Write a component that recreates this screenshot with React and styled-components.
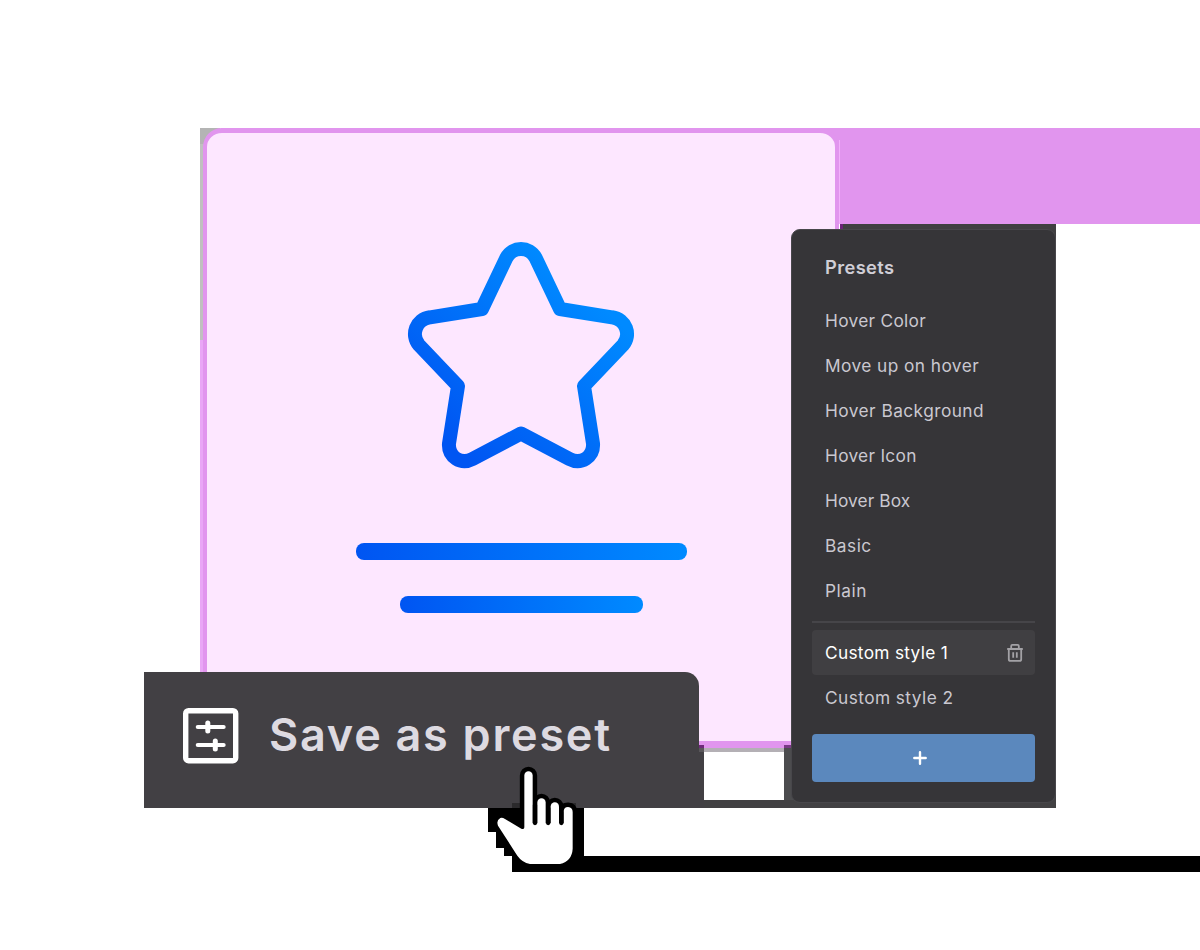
import React from 'react';
import styled, { createGlobalStyle } from 'styled-components';

const GlobalStyle = createGlobalStyle`
  * { box-sizing: border-box; }
  body { margin: 0; background: #fff; font-family: Inter, "Liberation Sans", sans-serif; }
`;

const fill = (color, x, y, w, h) =>
  `linear-gradient(${color}, ${color}) ${x}px ${y}px / ${w}px ${h}px no-repeat`;

/* The card, the preset panel and the save bar overlap, so they share one grid. */
const Stage = styled.main`
  display: grid;
  grid-template-columns: 144px 59px 495px 1px 92px 48px 217px 1fr;
  grid-template-rows: 128px 101px 443px 76px 55px 5px 1fr;
  width: 1200px;
  height: 950px;
  overflow: hidden;
  background:
    ${fill('#b4b4b4', 200, 128, 20, 16)},
    ${fill('#c0c0c0', 200, 144, 10, 196)},
    ${fill('#e9a6f6', 200, 340, 10, 340)},
    ${fill('#f2b0fb', 839, 140, 1, 84)},
    ${fill('#e195ee', 820, 128, 380, 96)},
    ${fill('#b4b0b5', 699, 740, 92, 12)},
    #fff;
`;

const Card = styled.section`
  grid-area: 2 / 3 / 5 / 7;
  border: 4px solid #e195ee;
  border-top-width: 5px;
  border-bottom-width: 7px;
  border-radius: 19px;
  background: #fde7ff;
  display: flex;
  flex-direction: column;
  align-items: center;
  padding: 104px 0 0 1px;
`;

const Underlay = styled.div`
  grid-area: 1 / 1 / -1 / -1;
  background:
    ${fill('#6b2378', 840, 224, 3, 5)},
    ${fill('#403f41', 840, 224, 216, 20)},
    ${fill('#6f2a7b', 699, 745, 5, 3)},
    ${fill('#59565a', 699, 748, 5, 4)},
    ${fill('#424044', 699, 752, 5, 56)},
    ${fill('#7b3a87', 784, 745, 7, 3)},
    ${fill('#4c4c4e', 784, 748, 12, 52)},
    ${fill('#424143', 699, 800, 357, 8)},
    ${fill('#424143', 1040, 780, 16, 20)};
`;

const StarIcon = styled.svg`
  display: block;
  width: 240px;
  height: 240px;
`;

const Bars = styled.div`
  display: flex;
  flex-direction: column;
  align-items: center;
  gap: 36px;
  padding-top: 66px;
`;

const Bar = styled.div`
  width: ${(p) => p.$width}px;
  height: 17px;
  border-radius: 8px;
  background: linear-gradient(90deg, #0055f2, #008aff);
`;

const PresetPanel = styled.aside`
  grid-area: 3 / 5 / 6 / 8;
  justify-self: end;
  width: 265px;
  height: 574px;
  padding: 16px 20px 20px;
  border: 1px solid #48474b;
  border-radius: 9px;
  background: #363538;
  display: flex;
  flex-direction: column;
`;

const PanelTitle = styled.h2`
  margin: 0 0 8px;
  padding-left: 13px;
  height: 44px;
  line-height: 43px;
  font-size: 18.3px;
  font-weight: 600;
  color: #d0ced6;
`;

const PresetRow = styled.div`
  display: flex;
  align-items: center;
  justify-content: space-between;
  flex: none;
  height: 45px;
  padding: 0 11px 0 13px;
  border-radius: 4px;
  font-size: 17.3px;
  white-space: nowrap;
  color: ${(p) => (p.$active ? '#fff' : '#cac8d0')};
  background: ${(p) => (p.$active ? '#403f42' : 'transparent')};
`;

const Label = styled.span`
  letter-spacing: ${(p) => p.$tracking || 0}px;
`;

const Divider = styled.hr`
  width: 100%;
  height: 2px;
  margin: 8px 0 7px;
  border: 0;
  background: #464549;
`;

const AddButton = styled.button`
  display: flex;
  align-items: center;
  justify-content: center;
  flex: none;
  height: 48px;
  margin-top: 14px;
  padding: 0 7px 0 0;
  border: 0;
  border-radius: 4px;
  background: #5b88bd;
`;

const SaveBar = styled.div`
  grid-area: 4 / 2 / 7 / 5;
  padding: 0 0 8px 38px;
  border-top-right-radius: 14px;
  background: #424044;
  display: flex;
  align-items: center;
  gap: 29px;
`;

const SaveLabel = styled.span`
  font-size: 45px;
  line-height: 54px;
  padding-bottom: 2px;
  font-weight: 600;
  letter-spacing: 1.73px;
  color: #dddae1;
  white-space: nowrap;
`;

const Cursor = styled.svg`
  position: absolute;
  left: 480px;
  top: 755px;
`;

const CursorShadow = styled.svg`
  position: absolute;
  left: 488px;
  top: 800px;
`;

const presets = [
  ['Hover Color', 0.3],
  ['Move up on hover', 0.43],
  ['Hover Background', 0.45],
  ['Hover Icon', 0.29],
  ['Hover Box', 0.1],
  ['Basic', 0.5],
  ['Plain', 0.55],
];

function Star() {
  return (
    <StarIcon viewBox="402 237 240 240" fill="none">
      <defs>
        <linearGradient id="star" gradientUnits="userSpaceOnUse" x1="445" y1="440" x2="585" y2="290">
          <stop offset="0" stopColor="#0055f2" />
          <stop offset="1" stopColor="#008aff" />
        </linearGradient>
      </defs>
      <path
        d="M482 309 L506.3 258 C512.5 246 529.5 246 535.7 258 L560 309 L612 317.3 C626 319 631.5 335 623 345 L584 386 L593 443.5 C594 457 581 465 569.5 459 L521 433.5 L472.5 459 C461 465 448 457 449 443.5 L458 386 L419 345 C410.5 335 416 319 430 317.3 Z"
        stroke="url(#star)"
        strokeWidth="14"
        strokeLinejoin="round"
      />
    </StarIcon>
  );
}

function SlidersIcon() {
  return (
    <svg width="58" height="58" viewBox="0 0 58 58" fill="none" stroke="#fff" strokeLinecap="round">
      <rect x="3.700" y="3.700" width="50" height="50" rx="2.800" strokeWidth="5.400" />
      <path d="M15.800 20H41.600M15.800 38H41.600" strokeWidth="4.200" />
      <path d="M25.800 16V24M33.300 34V42" strokeWidth="5" />
    </svg>
  );
}

function TrashIcon() {
  return (
    <svg width="18" height="20" viewBox="0 0 18 20" fill="none" stroke="#a3a2a6" strokeWidth="1.800">
      <path d="M1.200 6H16.800M2.800 6V16.200Q2.800 17.900 4.500 17.900H13.500Q15.200 17.900 15.200 16.200V6M5.200 5.500V3Q5.200 1.900 6.300 1.900H11.700Q12.800 1.900 12.800 3V5.500M7.200 9.300V14.800M10.800 9.300V14.800" />
    </svg>
  );
}

function HandShape() {
  return (
    <>
      <rect x="133" y="49" width="25" height="190" rx="12.500" />
      <rect x="172" y="130" width="25" height="110" rx="12.500" />
      <rect x="212" y="142" width="25" height="100" rx="12.500" />
      <path d="M251 220V169Q252 156 264 156Q278 157 278 171V281Q276 318 240 327H150Q126 322 112 302L54 212Q48 196 61 189Q67 187 75 192L124 221Q130 224 134 218L140 205H251Z" />
    </>
  );
}

function PointerHand() {
  return (
    <Cursor width="130" height="125" viewBox="0 0 390 375">
      <g fill="#000" stroke="#000" strokeWidth="27" strokeLinejoin="round">
        <HandShape />
      </g>
      <g fill="#fff">
        <HandShape />
      </g>
      <path d="M165 150V204M204.500 160V204M244 170V204" stroke="#000" strokeWidth="13" strokeLinecap="round" />
    </Cursor>
  );
}

export default function App() {
  return (
    <>
      <GlobalStyle />
      <Stage>
        <Card>
          <Star />
          <Bars>
            <Bar $width={331} />
            <Bar $width={243} />
          </Bars>
        </Card>
        <Underlay />
        <PresetPanel>
          <PanelTitle><Label $tracking={0.4}>Presets</Label></PanelTitle>
          {presets.map(([name, tracking]) => (
            <PresetRow key={name}><Label $tracking={tracking}>{name}</Label></PresetRow>
          ))}
          <Divider />
          <PresetRow $active><Label $tracking={0.3}>Custom style 1</Label><TrashIcon /></PresetRow>
          <PresetRow><Label $tracking={0.43}>Custom style 2</Label></PresetRow>
          <AddButton aria-label="Add preset">
            <svg width="14" height="14" viewBox="0 0 14 14" stroke="#fff" strokeWidth="2.400" strokeLinecap="round">
              <path d="M7 1.300V12.700M1.300 7H12.700" />
            </svg>
          </AddButton>
        </PresetPanel>
        <SaveBar>
          <SlidersIcon />
          <SaveLabel>Save as preset</SaveLabel>
        </SaveBar>
        <CursorShadow width="712" height="72" shapeRendering="crispEdges">
          <path d="M24 3H88V8H24Z" fill="#2b2a2c" />
          <path d="M0 8H96V56H712V72H24V56H16V48H8V32H0Z" fill="#000" />
        </CursorShadow>
        <PointerHand />
      </Stage>
    </>
  );
}
